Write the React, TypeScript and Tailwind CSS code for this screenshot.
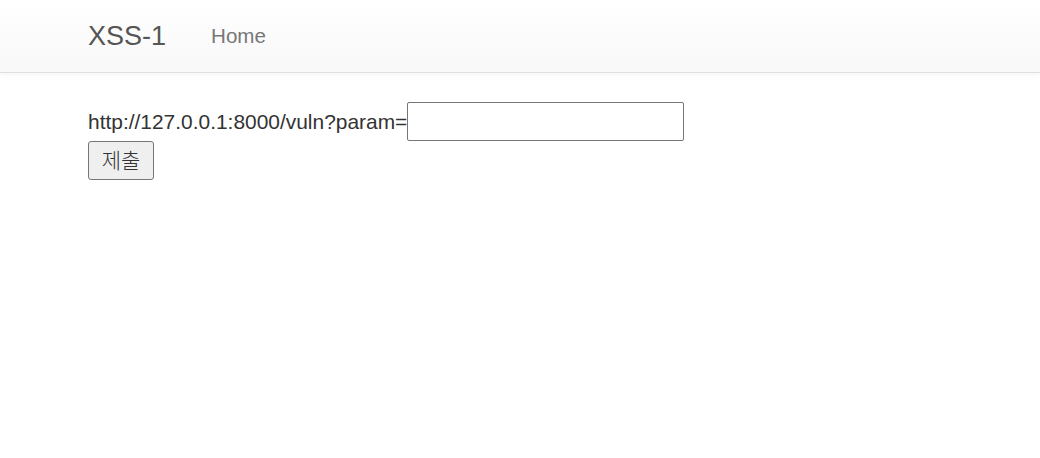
export default function App() {
  return (
    <div className="min-h-[458px] bg-white font-['Liberation_Sans',Arial,'Noto_Sans_CJK_KR',sans-serif] text-[#333]">
      <nav className="h-[73px] border-b border-[#e0e0e0] bg-gradient-to-b from-white to-[#f8f8f8] shadow-[0_1px_5px_rgba(0,0,0,0.06)]">
        <div className="flex h-[72px] items-center pl-[88px]">
          <span className="text-[27px] text-[#555]">XSS-1</span>
          <span className="ml-[45px] text-[20.6px] text-[#777]">Home</span>
        </div>
      </nav>
      <div className="pl-[88px] pt-[29px]">
        <div className="flex items-center">
          <span className="text-[20.93px] leading-[39px]">http://127.0.0.1:8000/vuln?param=</span>
          <input
            type="text"
            className="h-[39px] w-[277px] rounded-[2px] border border-[#767676] bg-white px-1 text-[21px] outline-none"
          />
        </div>
        <button className="flex h-[39px] w-[66px] items-center justify-center rounded-[3px] border border-[#767676] bg-[#efefef] text-[21px] font-light text-[#333]">
          제출
        </button>
      </div>
    </div>
  )
}
